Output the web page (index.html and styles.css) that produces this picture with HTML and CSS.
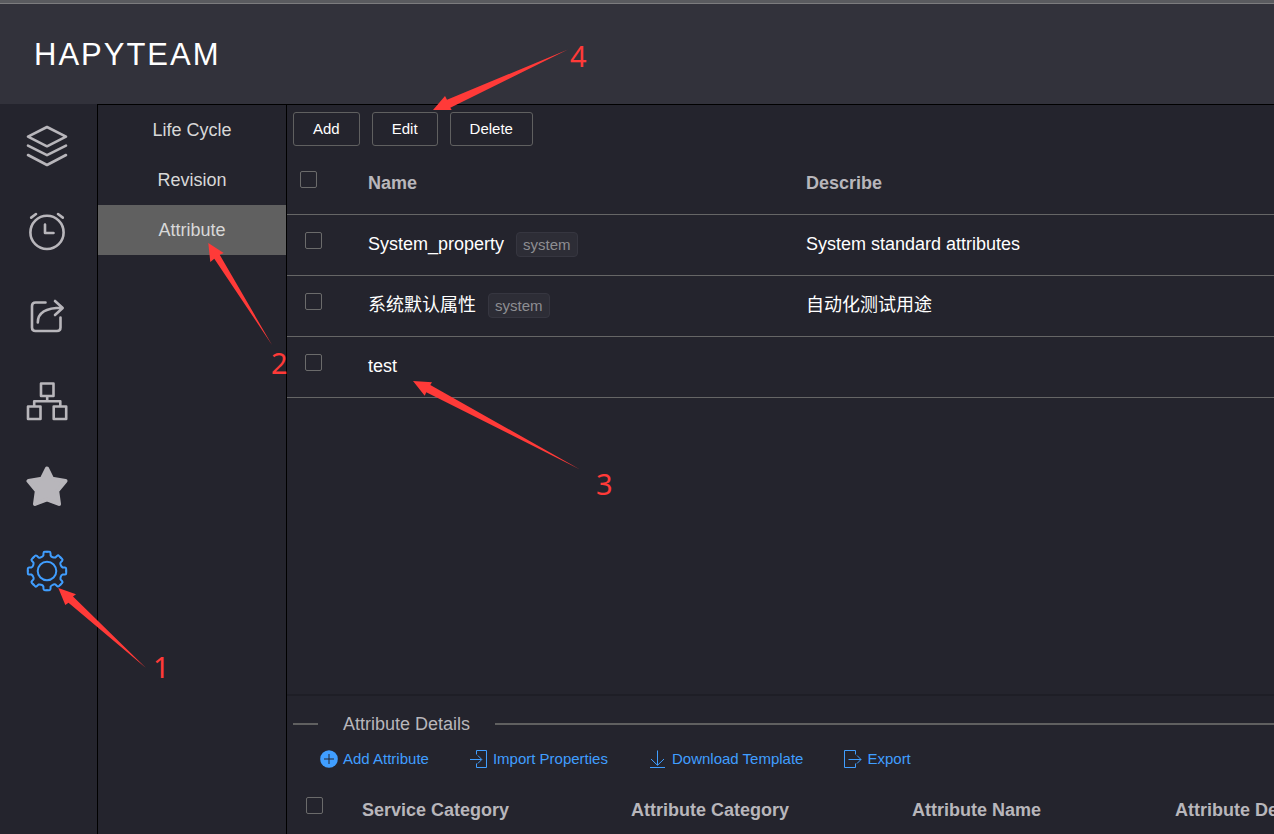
FILE: index.html
```html
<!DOCTYPE html>
<html lang="en">
<head>
<meta charset="utf-8">
<title>HAPYTEAM</title>
<link rel="stylesheet" href="styles.css">
</head>
<body>
<div class="app">
  <header class="header"><h1 class="logo">HAPYTEAM</h1></header>
  <div class="body">
    <nav class="rail" aria-label="Main">
      <a href="#layers" class="rail-link" aria-label="Layers">
        <svg class="rail-icon" viewBox="0 0 42 42"><path d="M2 11.7 21 2 40 11.7 21 21.3ZM2 20.6 21 30.2 40 20.6M2 30 21 40 40 30"/></svg>
      </a>
      <a href="#time" class="rail-link" aria-label="Time">
        <svg class="rail-icon" viewBox="0 0 42 42"><circle cx="21" cy="22.4" r="16.6"/><path d="M5.2 7.6 10 4M32 4 36.8 7.6M19 14.5V23H27.5"/></svg>
      </a>
      <a href="#share" class="rail-link" aria-label="Share">
        <svg class="rail-icon" viewBox="0 0 42 42"><path d="M19.5 7.5H9.500Q6 7.500 6 11V32.500Q6 36 9.500 36H31Q34.500 36 34.500 32.500V22.500M11.800 27.500C11.800 18 19 12.800 36 12.800M29 6 36.700 13 29 20"/></svg>
      </a>
      <a href="#structure" class="rail-link" aria-label="Structure">
        <svg class="rail-icon" viewBox="0 0 42 42"><path d="M15 3.500H27.500V16H15ZM2 26.500H14.500V39H2ZM27.700 26.500H40.200V39H27.700ZM21.200 16V21.200M8.200 26V21.200H34.300V26"/></svg>
      </a>
      <a href="#favorites" class="rail-link" aria-label="Favorites">
        <svg class="rail-icon star" viewBox="0 0 42 42"><path d="M21 3.500 26.200 13.800 39.500 16 31.200 26 33 39 21 34.300 9 39 10.800 26 2.500 16 15.800 13.800Z"/></svg>
      </a>
      <a href="#settings" class="rail-link active" aria-label="Settings" aria-current="page">
        <svg class="rail-icon gear" viewBox="-21 -21 42 42">
          <defs><path id="tooth" d="M0-19.200H2.200Q3.400-19.200 3.500-18L3.600-15.500Q4.200-14.200 5.700-13.800 7.100-13.300 8.400-13.500L10.250-15.200Q11.200-16 12-15.100L13.580-13.580"/></defs>
          <circle r="9.300"/>
          <use href="#tooth"/><use href="#tooth" transform="rotate(45)"/><use href="#tooth" transform="rotate(90)"/><use href="#tooth" transform="rotate(135)"/><use href="#tooth" transform="rotate(180)"/><use href="#tooth" transform="rotate(225)"/><use href="#tooth" transform="rotate(270)"/><use href="#tooth" transform="rotate(315)"/>
        </svg>
      </a>
    </nav>
    <nav class="submenu" aria-label="Settings">
      <a href="#lifecycle" class="submenu-link">Life Cycle</a>
      <a href="#revision" class="submenu-link">Revision</a>
      <a href="#attribute" class="submenu-link selected" aria-current="page">Attribute</a>
    </nav>
    <main class="main">
      <section class="pane list-pane">
        <div class="toolbar">
          <button type="button" class="button">Add</button>
          <button type="button" class="button">Edit</button>
          <button type="button" class="button">Delete</button>
        </div>
        <table class="table">
          <colgroup><col class="col-check"><col class="col-name"><col></colgroup>
          <thead>
            <tr><th class="check"><input type="checkbox" class="box" aria-label="Select all"></th><th>Name</th><th>Describe</th></tr>
          </thead>
          <tbody>
            <tr><td class="check"><input type="checkbox" class="box" aria-label="Select System_property"></td><td>System_property<span class="tag">system</span></td><td>System standard attributes</td></tr>
            <tr><td class="check"><input type="checkbox" class="box" aria-label="Select 系统默认属性"></td><td lang="zh">系统默认属性<span class="tag" lang="en">system</span></td><td lang="zh">自动化测试用途</td></tr>
            <tr><td class="check"><input type="checkbox" class="box" aria-label="Select test"></td><td>test</td><td></td></tr>
          </tbody>
        </table>
      </section>
      <section class="pane detail-pane">
        <h2 class="divider">Attribute Details</h2>
        <div class="actions">
          <button type="button" class="action"><svg class="action-icon" viewBox="0 0 18 18"><circle class="disc" cx="9" cy="9" r="8.800"/><path class="plus" d="M4 9H14M9 4V14"/></svg>Add Attribute</button>
          <button type="button" class="action"><svg class="action-icon" viewBox="0 0 18 18"><path d="M6.500 4.500V.5H16.500V17.500H6.500V13.500M0 9.500H11.500M7.800 5.500 11.800 9.500 7.800 13.500"/></svg>Import Properties</button>
          <button type="button" class="action"><svg class="action-icon" viewBox="0 0 18 18"><path d="M8.500.5V15M2 9 8.500 15.300 15 9M1 17.500H16"/></svg>Download Template</button>
          <button type="button" class="action"><svg class="action-icon" viewBox="0 0 18 18"><path d="M11.500 4.500V.5H.5V17.500H11.500V13.500M4.500 9.500H17M13 5.500 17 9.500 13 13.500"/></svg>Export</button>
        </div>
        <table class="table detail-table">
          <colgroup><col class="col-service-check"><col class="col-service"><col class="col-category"><col class="col-attribute"><col></colgroup>
          <thead>
            <tr><th class="check"><input type="checkbox" class="box" aria-label="Select all attributes"></th><th>Service Category</th><th>Attribute Category</th><th>Attribute Name</th><th>Attribute Describe</th></tr>
          </thead>
        </table>
      </section>
    </main>
  </div>
  <svg class="notes" width="640" height="700" viewBox="0 0 640 700">
    <path d="M58.300 588 76 594.300 73 596.500 146 668 68.500 602.800 65.300 605Z"/>
    <path d="M208.300 243 223.700 253 219.700 254.700 272 345 214.300 258.700 210.300 262Z"/>
    <path d="M413 381 432 382.300 430.300 385 580 469.500 426.300 392.300 424.700 395.700Z"/>
    <path d="M433 110 445 96 447 99.700 568 49.500 450.300 107.700 451.700 110Z"/>
    <text x="153" y="678">1</text>
    <text x="271" y="374">2</text>
    <text x="596" y="495">3</text>
    <text x="570" y="67">4</text>
  </svg>
</div>
</body>
</html>
```
FILE: styles.css
```css
* { box-sizing: border-box; }

body {
  margin: 0;
  background: #24242d;
  color: #fff;
  font: 18px/24px "Liberation Sans", Arial, "Noto Sans CJK SC", sans-serif;
}

a { color: inherit; text-decoration: none; }

.app {
  position: relative;
  display: flex;
  flex-direction: column;
  height: 100vh;
  overflow: hidden;
}

.header {
  display: flex;
  align-items: center;
  flex: none;
  height: 104px;
  padding: 2px 34px 0;
  background: #32323b;
  border-top: 3px solid #5a5b5f;
  box-shadow: inset 0 1px #7c7c7e;
}

.logo {
  margin: 0;
  font-size: 31px;
  font-weight: 400;
  line-height: 36px;
  letter-spacing: 2px;
}

.body { display: flex; flex: 1; min-height: 0; }

.rail { flex: none; width: 97px; padding-right: 3px; }

.rail-link {
  display: flex;
  align-items: center;
  justify-content: center;
  height: 85px;
  padding-bottom: 2px;
  color: #b8b6bb;
}

.rail-icon {
  width: 42px;
  height: 42px;
  fill: none;
  stroke: currentColor;
  stroke-width: 2.6;
  stroke-linecap: round;
  stroke-linejoin: round;
}

.star { fill: currentColor; stroke-width: 4; }
.gear { stroke-width: 2; }
.rail-link.active { color: #409eff; }

.submenu {
  flex: none;
  width: 190px;
  border: solid #000;
  border-width: 1px 1px 0;
  color: #d8d8d8;
  text-align: center;
}

.submenu-link { display: block; line-height: 50px; }
.selected { background: #606060; }

.main {
  display: flex;
  flex: 1;
  flex-direction: column;
  min-width: 0;
  border-top: 1px solid #000;
}

.pane { min-height: 0; overflow: hidden; }
.list-pane { flex: 81; }
.detail-pane { flex: 19; border-top: 2px solid #1e1e26; }

.toolbar { display: flex; gap: 12px; padding: 7px 6px 8px; }

.button {
  height: 34px;
  padding: 0 19px;
  border: 1px solid #606060;
  border-radius: 3px;
  background: none;
  color: #fff;
  font: inherit;
  font-size: 15px;
}

.table { width: 100%; table-layout: fixed; border-collapse: separate; border-spacing: 0; }

.table th, .table td {
  height: 61px;
  padding: 0 0 2px;
  border-bottom: 1px solid #666;
  text-align: left;
  white-space: nowrap;
}

.table th { color: #b8b6bb; }
.table .check { padding-bottom: 10px; line-height: 0; }
.table th.check { padding-left: 13px; }
.table td.check { padding-left: 18px; }
.detail-table th.check { padding-left: 19px; }

.col-check { width: 81px; }
.col-name { width: 438px; }
.col-service-check { width: 75px; }
.col-service { width: 269px; }
.col-category { width: 281px; }
.col-attribute { width: 263px; }

.box {
  width: 17px;
  height: 17px;
  margin: 0;
  appearance: none;
  border: 1px solid #6b6b6b;
  border-radius: 2px;
}

.box:checked { background: #409eff; }

.tag {
  display: inline-block;
  height: 25px;
  margin-left: 12px;
  padding: 0 6px;
  border: 1px solid #363640;
  border-radius: 4px;
  background: #2d2d36;
  color: #8d8e92;
  font-size: 15px;
  line-height: 23px;
}

.divider {
  display: flex;
  align-items: center;
  gap: 25px;
  margin: 0;
  padding: 16px 0 11px 6px;
  color: #b8b6bb;
  font-size: 18px;
  font-weight: 400;
}

.divider::before, .divider::after {
  width: 25px;
  height: 2px;
  background: #606060;
  content: "";
}

.divider::after { flex: 1; }

.actions { display: flex; gap: 41px; padding: 0 33px 10px; }

.action {
  display: flex;
  align-items: center;
  gap: 5px;
  padding: 0;
  border: 0;
  background: none;
  color: #409eff;
  font: inherit;
  font-size: 15px;
  line-height: 24px;
}

.action-icon { width: 18px; height: 18px; fill: none; stroke: currentColor; }
.disc { fill: currentColor; stroke: none; }
.plus { stroke: #24242d; }

.notes {
  position: absolute;
  top: 0;
  left: 0;
  fill: #ff3a38;
  font: 29px "Noto Sans", sans-serif;
  pointer-events: none;
}
```
